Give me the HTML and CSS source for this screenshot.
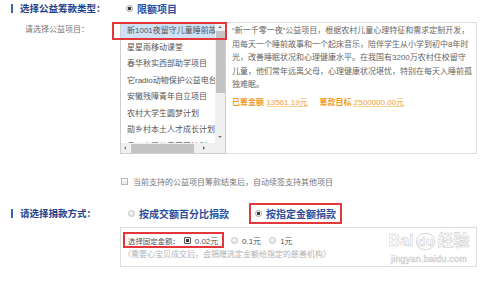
FILE: index.html
```html
<!DOCTYPE html>
<html lang="zh-CN">
<head>
    <meta charset="UTF-8">
    <meta name="viewport" content="width=device-width, initial-scale=1.0">
    <title>选择公益筹款</title>
    <link rel="stylesheet" href="styles.css">
</head>
<body>
    <div class="page">
        <!-- 筹款类型 -->
        <div class="row row-type">
            <div class="title"><span class="bar"></span>选择公益筹款类型：</div>
            <div class="opt big"><span class="radio on"></span>限额项目</div>
        </div>

        <!-- 项目列表 + 说明 -->
        <div class="row row-project">
            <div class="label">请选择公益项目：</div>
            <div class="project">
                <div class="listbox">
                    <ul class="items">
                        <li class="item current">新1001夜留守儿童睡前故事</li>
                        <li class="item">星星雨移动课堂</li>
                        <li class="item">春华秋实西部助学项目</li>
                        <li class="item">它radio动物保护公益电台</li>
                        <li class="item">安徽残障青年自立项目</li>
                        <li class="item">农村大学生圆梦计划</li>
                        <li class="item">勋乡村本土人才成长计划</li>
                        <li class="item">贵州山区儿童营养计划</li>
                    </ul>
                    <div class="vscroll">
                        <span class="arrow up"></span>
                        <span class="vthumb"></span>
                        <span class="arrow down"></span>
                    </div>
                    <div class="hscroll">
                        <span class="arrow left"></span>
                        <span class="hthumb"></span>
                        <span class="arrow right"></span>
                    </div>
                    <div class="corner"></div>
                </div>
                <div class="desc">
                    <p class="text">“新一千零一夜”公益项目，根据农村儿童心理特征和需求定制开发，<br>用每天一个睡前故事和一个起床音乐，陪伴学生从小学到初中8年时<br>光，改善睡眠状况和心理健康水平。在我国有3200万农村住校留守<br>儿童，他们常年远离父母，心理健康状况堪忧，特别在每天入睡前孤<br>独难眠。</p>
                    <p class="stat"><b>已筹金额</b> <u>13561.19元</u><b class="goal">筹款目标</b> <u>2500000.00元</u></p>
                </div>
                <div class="mark mark-item"></div>
            </div>
        </div>

        <!-- 自动续签 -->
        <div class="row row-check">
            <div></div>
            <div class="check"><span class="box"></span>当前支持的公益项目筹款结束后，自动续签支持其他项目</div>
        </div>

        <!-- 捐款方式 -->
        <div class="row row-way">
            <div class="title"><span class="bar"></span>请选择捐款方式：</div>
            <div class="ways">
                <div class="opt big"><span class="radio"></span>按成交额百分比捐款</div>
                <div class="opt big marked"><span class="radio on"></span>按指定金额捐款</div>
            </div>
        </div>

        <div class="row row-amount">
            <div></div>
            <div class="amount">
                <div class="amount-line">
                    <div class="fixed">
                        <span class="fixed-label">选择固定金额：</span>
                        <span class="opt"><span class="radio on focus"></span>0.02元</span>
                    </div>
                    <span class="opt"><span class="radio"></span>0.1元</span>
                    <span class="opt"><span class="radio"></span>1元</span>
                </div>
                <div class="note">（需要心宝贝成交后，会捐赠选定金额给指定的慈善机构）</div>
            </div>
        </div>

        <!-- 水印 -->
        <div class="watermark">
            <div class="wm-logo">Bai<span class="wm-du">du</span>经验</div>
            <div class="wm-url">jingyan.baidu.com</div>
        </div>
    </div>
</body>
</html>
```

FILE: styles.css
```css
*{
    box-sizing: border-box;
}
body{
    margin: 0;
    background: #fff;
    font-family: "Liberation Sans", "Noto Sans CJK SC", sans-serif;
    font-size: 8px;
    color: #666;
}
.page{
    position: relative;
    width: 500px;
    height: 282px;
    overflow: hidden;
}
ul, p{
    margin: 0;
    padding: 0;
}

/* rows: label column + content column */
.row{
    display: grid;
    grid-template-columns: 120px 357px;
}
.row-type{
    height: 16px;
    align-items: center;
}
.row-project{
    margin-top: 6px;
}
.row-check{
    margin-top: 21px;
    height: 12px;
    align-items: center;
}
.row-way{
    margin-top: 15px;
    height: 22px;
    align-items: center;
}
.row-amount{
    margin-top: 3px;
}

/* titles */
.title{
    display: flex;
    align-items: center;
    padding-left: 11px;
    font-size: 9.5px;
    font-weight: bold;
    color: #23408a;
}
.bar{
    width: 2px;
    height: 9px;
    margin-right: 7px;
    background: #3b63b5;
}
.label{
    padding: 2px 0 0 25px;
    line-height: 12px;
    color: #777;
}

/* radios */
.opt{
    display: inline-flex;
    align-items: center;
    white-space: nowrap;
}
.opt.big{
    font-size: 10px;
    font-weight: bold;
    color: #2b4f9e;
}
.row-type .opt{
    padding-left: 6px;
}
.radio{
    width: 7px;
    height: 7px;
    margin-right: 4px;
    border: 1px solid #c4c4c4;
    border-radius: 50%;
    background: radial-gradient(circle at 40% 40%, #fafafa, #dcdcdc);
    flex: none;
}
.radio.on{
    background: radial-gradient(circle, #3a3a3a 0 1.6px, #f2f2f2 2px);
    border-color: #a8a8a8;
}
.radio.focus{
    border-radius: 1px;
    border-color: #555;
}

/* project list */
.project{
    position: relative;
    display: flex;
    height: 132px;
}
.listbox{
    display: grid;
    grid-template-columns: 94px 10px;
    grid-template-rows: 120px 10px;
    width: 106px;
    border: 1px solid #cfcfcf;
    background: #fff;
}
.items{
    list-style: none;
    overflow: hidden;
}
.item{
    height: 16.5px;
    padding-left: 6px;
    line-height: 16.5px;
    white-space: nowrap;
    overflow: hidden;
    color: #555;
}
.item.current{
    background: #cfe1f7;
}
.vscroll{
    display: flex;
    flex-direction: column;
    align-items: center;
    background: #f0f0f0;
}
.vthumb{
    width: 9px;
    height: 62px;
    margin-top: 1px;
    background: #c3c3c3;
}
.hscroll{
    display: flex;
    align-items: center;
    background: #f0f0f0;
}
.hthumb{
    width: 63px;
    height: 9px;
    margin-left: 2px;
    background: #c3c3c3;
}
.corner{
    background: #f0f0f0;
}
.arrow{
    width: 0;
    height: 0;
    border: 2.5px solid transparent;
    flex: none;
}
.arrow.up{
    margin: 3px 0 2px;
    border-bottom-color: #777;
    border-top-width: 0;
}
.arrow.down{
    margin: auto 0 5px;
    border-top-color: #777;
    border-bottom-width: 0;
}
.arrow.left{
    margin: 0 3px 0 3px;
    border-right-color: #888;
    border-left-width: 0;
}
.arrow.right{
    margin: 0 0 0 9px;
    border-left-color: #666;
    border-right-width: 0;
}

.desc{
    width: 251px;
    border: 1px solid #ddd;
    border-left: none;
    padding: 1px 3px 4px 6px;
}
.text{
    line-height: 13.5px;
    white-space: nowrap;
    color: #666;
}
.stat{
    margin-top: 4px;
    line-height: 13px;
    color: #f39a1e;
    white-space: nowrap;
}
.stat b{
    font-weight: bold;
}
.stat u{
    text-decoration-color: #f6d29c;
    color: #f2a23a;
}
.stat .goal{
    margin-left: 12px;
}

/* red annotation boxes */
.mark{
    position: absolute;
    border: 2px solid #e2383a;
}
.mark-item{
    left: -8px;
    top: 0;
    width: 115px;
    height: 18px;
}
.marked{
    height: 21px;
    margin-left: 20px;
    padding: 0 4px 0 4px;
    border: 2px solid #e2383a;
}

/* checkbox row */
.check{
    display: flex;
    align-items: center;
    padding-left: 1px;
    color: #777;
    white-space: nowrap;
}
.box{
    width: 7px;
    height: 7px;
    margin-right: 5px;
    border: 1px solid #b8b8b8;
    background: linear-gradient(#fdfdfd, #e6e6e6);
}

.ways{
    display: flex;
    align-items: center;
    padding-left: 8px;
}

/* fixed amount */
.amount{
    height: 40px;
    border: 1px solid #ddd;
    padding: 4px 0 0 2px;
}
.amount-line{
    display: flex;
    align-items: center;
    height: 16px;
    color: #555;
    white-space: nowrap;
}
.amount-line .opt{
    margin-right: 8px;
}
.fixed{
    display: flex;
    align-items: center;
    flex: none;
    width: 101px;
    height: 16px;
    margin-right: 7px;
    padding-left: 3px;
    border: 2px solid #e2383a;
    white-space: nowrap;
}
.fixed-label{
    margin-right: 4px;
    font-size: 7.4px;
}
.fixed .opt{
    margin-right: 0;
}
.note{
    margin-top: 1px;
    line-height: 12px;
    color: #b3b3b3;
    white-space: nowrap;
}

/* watermark over the bottom right */
.watermark{
    position: absolute;
    left: 381px;
    top: 228px;
    width: 96px;
    text-align: center;
    white-space: nowrap;
    color: rgba(255,255,255,0.6);
    -webkit-text-stroke: 0.6px #d0d0d0;
}
.wm-logo{
    font-size: 16px;
    font-weight: bold;
    line-height: 26px;
}
.wm-du{
    margin: 0 2px;
    padding: 0 1px;
    border: 1.5px solid #d8d8d8;
    border-radius: 8px;
    font-size: 13px;
}
.wm-url{
    margin-top: -1px;
    font-size: 9px;
    line-height: 10px;
    letter-spacing: 0.2px;
}
```
